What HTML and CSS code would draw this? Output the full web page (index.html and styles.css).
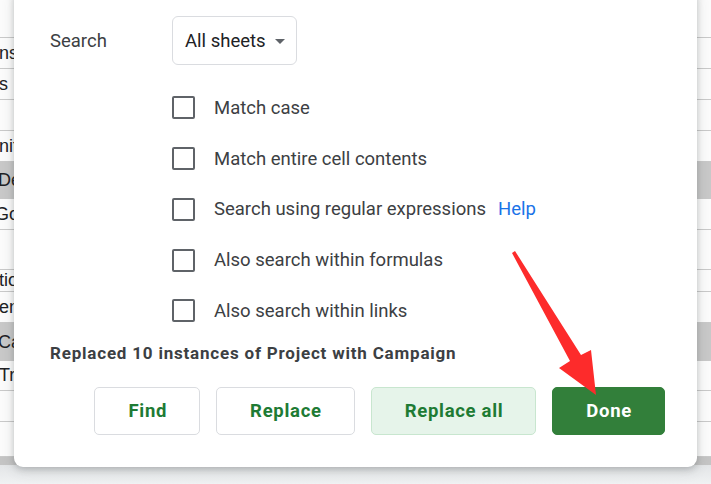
FILE: index.html
```html
<!DOCTYPE html>
<html lang="en">
  <head>
    <meta charset="UTF-8" />
    <meta name="viewport" content="width=device-width, initial-scale=1.0" />
    <title>Find and replace</title>
    <link rel="stylesheet" href="styles.css">
  </head>
  <body>
    <div class="sheet">
      <div class="row"></div>
      <div class="row"><span class="cell">nstructions</span></div>
      <div class="row"><span class="cell">s</span></div>
      <div class="row"></div>
      <div class="row"><span class="cell">nitial</span></div>
      <div class="row row-dark"><span class="cell cell-big">Deliverables</span></div>
      <div class="row"><span class="cell cell-cut">Goals</span></div>
      <div class="row"></div>
      <div class="row"><span class="cell">tions</span></div>
      <div class="row"><span class="cell">ent</span></div>
      <div class="row row-dark"><span class="cell cell-big">Campaign</span></div>
      <div class="row"><span class="cell">Tracking</span></div>
      <div class="row"></div>
      <div class="row"></div>
      <div class="scrollbar"></div>
      <div class="tabs"></div>
    </div>

    <div class="dialog">
      <div class="search-row">
        <span class="label">Search</span>
        <div class="dropdown">
          <span>All sheets</span>
          <span class="caret"></span>
        </div>
      </div>

      <div class="options">
        <label class="option"><span class="box"></span>Match case</label>
        <label class="option"><span class="box"></span>Match entire cell contents</label>
        <label class="option"><span class="box"></span>Search using regular expressions<a class="help" href="#">Help</a></label>
        <label class="option"><span class="box"></span>Also search within formulas</label>
        <label class="option"><span class="box"></span>Also search within links</label>
      </div>

      <p class="status">Replaced 10 instances of Project with Campaign</p>

      <div class="actions">
        <button class="btn">Find</button>
        <button class="btn">Replace</button>
        <button class="btn btn-soft">Replace all</button>
        <button class="btn btn-done">Done</button>
      </div>
    </div>

    <svg class="arrow" width="711" height="484" viewBox="0 0 711 484">
      <polygon points="512,253 515,251 581,355 591,350 596,395 559,368 570,361" fill="#fd2b2b" />
    </svg>
  </body>
</html>
```

FILE: styles.css
```css
* {
  margin: 0;
  padding: 0;
  box-sizing: border-box;
}

body {
  width: 711px;
  height: 484px;
  overflow: hidden;
  position: relative;
  font-family: Roboto, 'Liberation Sans', sans-serif;
  background: #fff;
}

/* spreadsheet behind the dialog */
.sheet {
  display: grid;
  grid-template-rows: 38px 31px 31px 31px 31px 37px 31px 40px 22px 31px 38px 30px 31px 35px 8px 19px;
  height: 484px;
  background: #fbfbfb;
}

.row {
  border-bottom: 1px solid #c9c9c9;
  display: flex;
  align-items: center;
  overflow: hidden;
}

.row-dark {
  background: #c8c8c8;
  border-bottom: none;
}

.cell {
  width: 15px;
  overflow: hidden;
  font-family: 'Liberation Sans', Arial, sans-serif;
  font-size: 18px;
  color: #202124;
  margin-left: -1px;
  white-space: nowrap;
}

.cell-big {
  margin-left: -2px;
  width: 16px;
}

.cell-cut {
  margin-left: -5px;
  width: 19px;
}

.scrollbar {
  background: #c4c4c4;
}

.tabs {
  background: linear-gradient(#e3e5e7, #f0f2f3);
}

/* find and replace dialog */
.dialog {
  position: absolute;
  left: 14px;
  top: -12px;
  width: 683px;
  height: 479px;
  background: #fff;
  border-radius: 9px;
  box-shadow: 0 2px 6px rgba(60, 64, 67, 0.25), 0 4px 14px rgba(60, 64, 67, 0.12);
  padding: 28px 32px 0 36px;
  color: #3c4043;
  font-size: 18.5px;
}

.search-row {
  display: flex;
  align-items: center;
}

.label {
  width: 122px;
}

.dropdown {
  display: flex;
  align-items: center;
  width: 125px;
  height: 49px;
  padding: 0 11px 0 12px;
  border: 1px solid #dadce0;
  border-radius: 6px;
  color: #202124;
  justify-content: space-between;
}

.caret {
  width: 0;
  height: 0;
  border-left: 5px solid transparent;
  border-right: 5px solid transparent;
  border-top: 5px solid #5f6368;
  margin-top: 1px;
}

.options {
  margin-left: 122px;
  margin-top: 17.5px;
}

.option {
  display: flex;
  align-items: center;
  height: 50.75px;
  gap: 19px;
}

.box {
  width: 23px;
  height: 23px;
  border: 2px solid #5f6368;
  border-radius: 2px;
  flex-shrink: 0;
}

.help {
  color: #1a73e8;
  text-decoration: none;
  margin-left: -7px;
}

.status {
  font-weight: bold;
  font-size: 17px;
  letter-spacing: 0.8px;
  line-height: 20px;
  margin-top: 6.5px;
}

.actions {
  display: flex;
  justify-content: flex-end;
  gap: 16px;
  margin-top: 24px;
}

.btn {
  height: 48px;
  padding: 0 32px 0 33px;
  border: 1px solid #dadce0;
  border-radius: 5px;
  background: #fff;
  color: #1e7b34;
  font-family: Roboto, 'Liberation Sans', sans-serif;
  font-size: 18.5px;
  font-weight: bold;
  letter-spacing: 0.7px;
}

.btn-soft {
  background: #e6f4ea;
  border-color: #c8e6cf;
}

.btn-done {
  background: #327f3a;
  border-color: #327f3a;
  color: #fff;
}

.arrow {
  position: absolute;
  left: 0;
  top: 0;
}
```
